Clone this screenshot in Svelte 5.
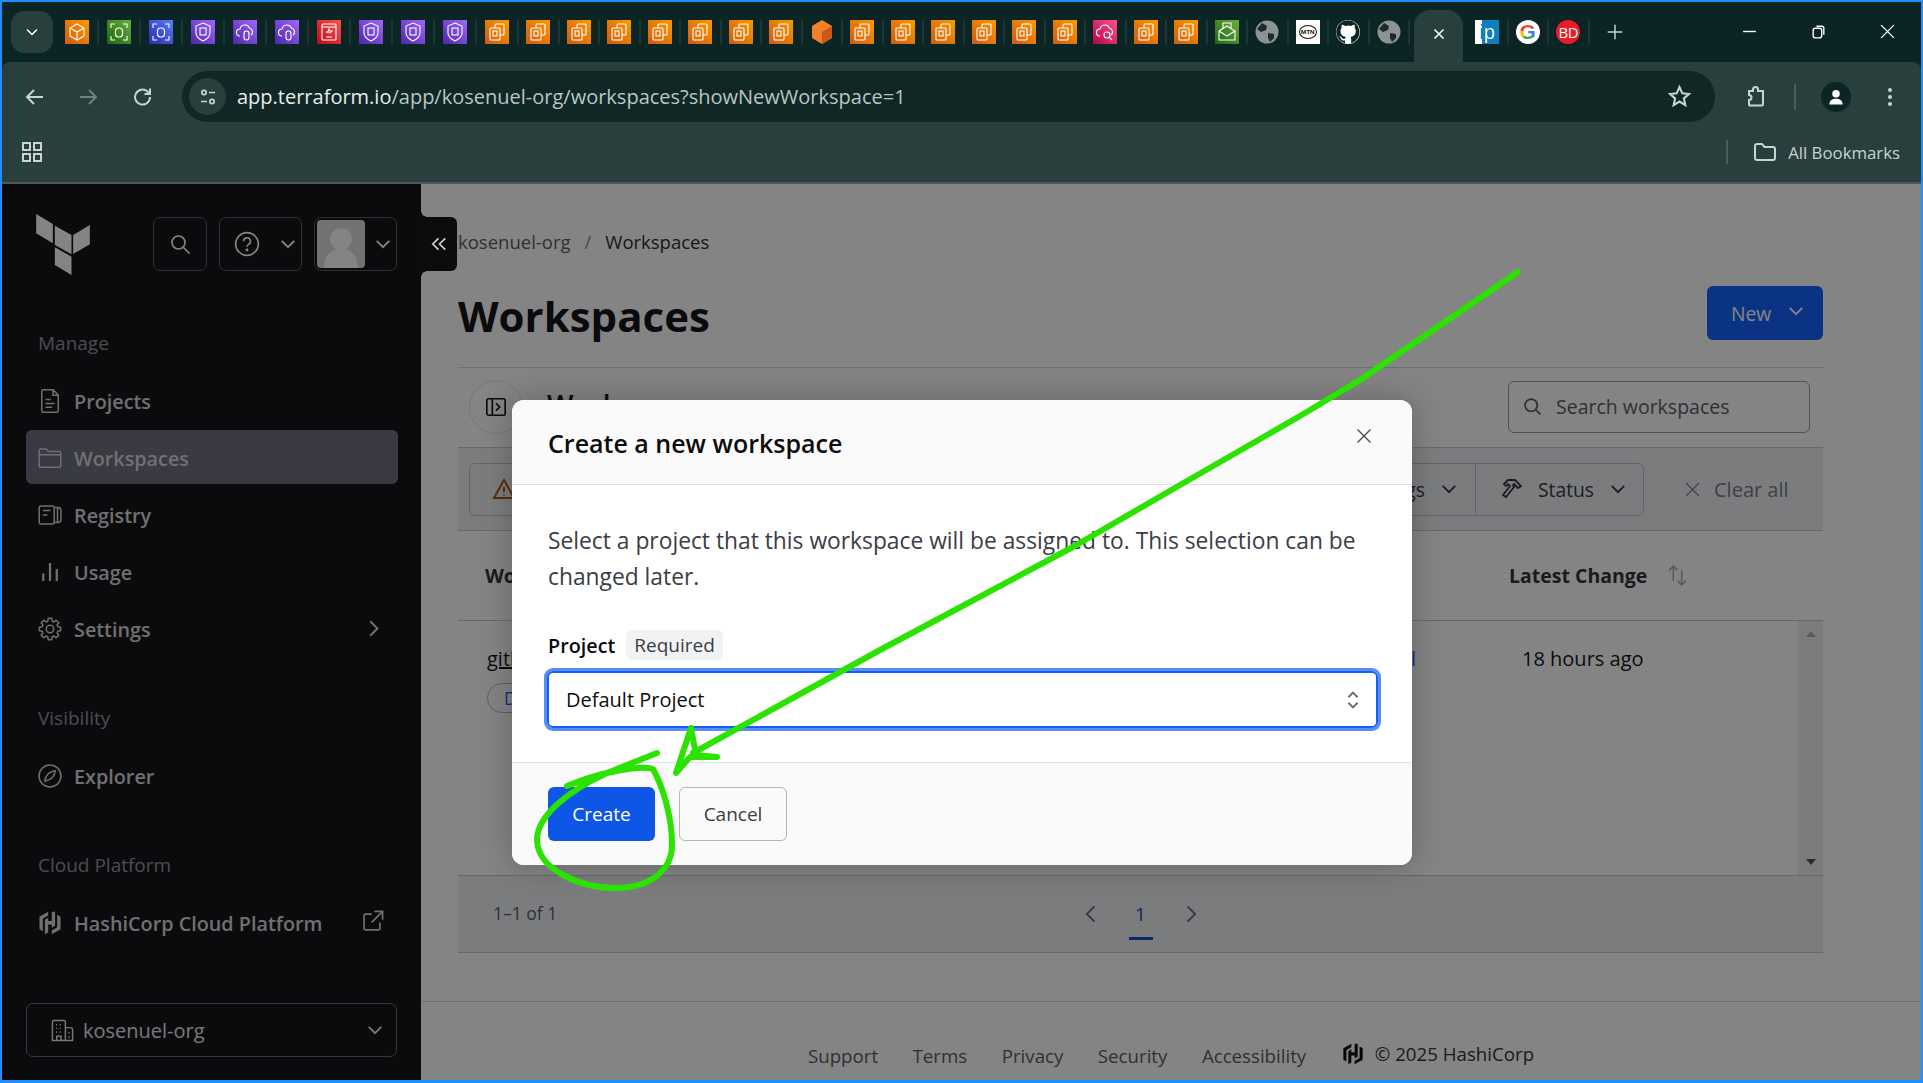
<script>
	const lead = ['cube', 'scanG', 'scanB', 'shield', 'cloud', 'cloud', 'red', 'shield', 'shield', 'shield', 'ec2'];
	const rest = ['ec2', 'ec2', 'ec2', 'ec2', 'ec2', 'ec2', 'ec2', 'hex', 'ec2', 'ec2', 'ec2', 'ec2', 'ec2', 'ec2', 'pink', 'ec2', 'ec2', 'mail', 'globe', 'mtn', 'github', 'globe'];
	const after = ['ip', 'google', 'bd'];

	const nav = [
		{ label: 'Projects', icon: 'doc' },
		{ label: 'Workspaces', icon: 'folder', active: true },
		{ label: 'Registry', icon: 'registry' },
		{ label: 'Usage', icon: 'usage' },
		{ label: 'Settings', icon: 'gear', more: true }
	];

	// eight toothed gear outline
	function gearPath() {
		let d = '';
		for (let i = 0; i < 8; i++) {
			const a = (i * Math.PI) / 4;
			const pts = [[-0.27, 5.4], [-0.17, 7.2], [0.17, 7.2], [0.27, 5.4]];
			for (const [da, r] of pts) {
				const x = 8 + r * Math.sin(a + da);
				const y = 8 - r * Math.cos(a + da);
				d += (d ? 'L' : 'M') + x.toFixed(2) + ' ' + y.toFixed(2);
			}
		}
		return d + 'Z';
	}
	const gear = gearPath();
</script>

{#snippet fav(kind)}
	{#if kind === 'globe'}
		<svg class="fav" viewBox="0 0 24 24"><circle cx="12" cy="12" r="11.5" fill="#8b9393" /><path d="M7 3l5 3-1 4-5 2-4-3zM13 13l6 1 0 4-4 4-2-4z" fill="#1d2b2b" /></svg>
	{:else if kind === 'github'}
		<svg class="fav" viewBox="0 0 16 16"><circle cx="8" cy="8" r="8" fill="#fff" /><path d="M8 .2a7.8 7.8 0 0 0-2.5 15.2c.4.1.5-.2.5-.4v-1.4c-2.2.5-2.6-1-2.6-1-.4-.9-.9-1.200-.9-1.200-.7-.5.1-.5.1-.5.8.1 1.200.8 1.200.8.7 1.200 1.900.9 2.300.7.100-.5.300-.9.500-1.100-1.700-.2-3.600-.9-3.600-3.900 0-.9.300-1.600.800-2.100-.1-.2-.4-1 .1-2.100 0 0 .7-.2 2.200.8a7.500 7.500 0 0 1 4 0c1.500-1 2.200-.8 2.200-.8.4 1.100.2 1.900.1 2.100.5.5.8 1.200.8 2.100 0 3-1.900 3.700-3.600 3.900.3.200.5.700.5 1.400v2.200c0 .2.100.5.500.4A7.800 7.800 0 0 0 8 .2z" fill="#0b2524" /></svg>
	{:else if kind === 'mtn'}
		<span class="fav mtn"><b>MTN</b></span>
	{:else if kind === 'ip'}
		<span class="fav ip"><b>ip</b></span>
	{:else if kind === 'google'}
		<span class="fav google"><b>G</b></span>
	{:else if kind === 'bd'}
		<span class="fav bd"><b>BD</b></span>
	{:else if kind === 'hex'}
		<svg class="fav" viewBox="0 0 24 24"><path d="M12 0l10 6v12l-10 6-10-6V6z" fill="#f0812a" /><path d="M12 12l10-6v12l-10 6z" fill="#c9581a" /></svg>
	{:else}
		<svg class="fav box {kind}" viewBox="0 0 24 24" fill="none" stroke="#fff" stroke-width="1.1">
			{#if kind === 'cube'}
				<path d="M12 4l7 4v8l-7 4-7-4V8zM5 8l7 4 7-4M12 12v8" />
			{:else if kind === 'scanG' || kind === 'scanB'}
				<path d="M4 8V4h4M16 4h4v4M4 16v4h4M16 20h4v-4" />
				<rect x="8.500" y="8" width="7" height="9" rx="3" />
			{:else if kind === 'shield'}
				<path d="M12 3l7 3v7c0 4-3 6-7 8-4-2-7-4-7-8V6z" /><rect x="9" y="8" width="6" height="7" />
			{:else if kind === 'cloud' || kind === 'pink'}
				<path d="M7 16a3.500 3.500 0 0 1 0-7 5 5 0 0 1 9.500-1A4 4 0 0 1 18 15" />
				{#if kind === 'cloud'}<rect x="11" y="11" width="5" height="9" rx="2.500" />{:else}<circle cx="14" cy="15" r="3" /><path d="M16 17l3 3" />{/if}
			{:else if kind === 'red'}
				<rect x="5" y="4" width="14" height="16" rx="1" /><path d="M5 7h14M9 17h6M12 9l1 2h2l-2 2-4-1h2z" />
			{:else if kind === 'mail'}
				<path d="M4 11l8-5 8 5v9H4zM4 11l8 5 8-5" /><path d="M8 9V3h8v6" />
			{:else}
				<path d="M10 8V5a1 1 0 0 1 1-1h7a1 1 0 0 1 1 1v9a1 1 0 0 1-1 1h-3" /><rect x="5" y="8" width="10" height="12" rx="1" /><rect x="8" y="11" width="4" height="5" />
			{/if}
		</svg>
	{/if}
{/snippet}

{#snippet navIcon(kind)}
	<svg class="nav-ic" viewBox="0 0 16 16" fill="none" stroke="currentColor" stroke-width="1">
		{#if kind === 'doc'}
			<path d="M2.500 1.500a1 1 0 0 1 1-1H10l3.500 3.500v10.500a1 1 0 0 1-1 1h-9a1 1 0 0 1-1-1zM5 7h3.500M5 9.700h6M5 12.200h4.500M10 .8v3.400h3.300" />
		{:else if kind === 'folder'}
			<path d="M.8 3a1 1 0 0 1 1-1h3.700l1.500 1.700h7.200a1 1 0 0 1 1 1v8.500a1 1 0 0 1-1 1H1.800a1 1 0 0 1-1-1zM.8 5.800h14.400" />
		{:else if kind === 'registry'}
			<path d="M1.800 2h8a1 1 0 0 1 1 1v10a1 1 0 0 1-1 1h-8a1 1 0 0 1-1-1V3a1 1 0 0 1 1-1zM3.300 5h5M3.300 8h3M10.800 3h2.500a2 2 0 0 1 2 2v6a2 2 0 0 1-2 2h-2.500M13 3v10" />
		{:else if kind === 'usage'}
			<path stroke-width="1.500" d="M3.500 9v5M8 2v12M12.500 6v8" />
		{:else if kind === 'gear'}
			<path d={gear} stroke-linejoin="round" /><circle cx="8" cy="8" r="2.500" />
		{:else if kind === 'compass'}
			<circle cx="8" cy="8" r="7.300" /><path d="M11.500 4.500c-.3 3.500-2 6-7 7 .5-4 3-6.500 7-7z" />
		{/if}
	</svg>
{/snippet}

{#snippet chevron(cls)}
	<svg class="chev {cls}" viewBox="0 0 16 16" fill="none" stroke="currentColor" stroke-width="1.500"><path d="M3 5.500l5 5 5-5" /></svg>
{/snippet}

{#snippet hashi(cls)}
	<svg class={cls} viewBox="0 0 16 16" fill="currentColor"><path d="M6.800.5L1 3.800v8.400l2.200 1.300V5.100l3.600-2.100zM9.200.5v6.200H6.800V4.500L4.600 5.800V15.500l2.200-1.300V9h2.400v2.200l2.200-1.300V.5zM12.800 2.500v8.400l-3.600 2.100v2.500L15 12.200V3.800z" /></svg>
{/snippet}

<div class="frame">
	<header class="tabstrip">
		<button class="tabsearch" aria-label="Search tabs">{@render chevron('tabsearch-ic')}</button>
		{#each lead as t}
			<div class="tab wide">{@render fav(t)}</div>
		{/each}
		{#each rest as t}
			<div class="tab">{@render fav(t)}</div>
		{/each}
		<div class="tab-active">
			<svg viewBox="0 0 16 16" class="tab-close" fill="none" stroke="currentColor" stroke-width="1.500"><path d="M3.500 3.500l9 9M12.500 3.500l-9 9" /></svg>
		</div>
		{#each after as t}
			<div class="tab">{@render fav(t)}</div>
		{/each}
		<svg class="plus" viewBox="0 0 16 16" fill="none" stroke="currentColor" stroke-width="1.300"><path d="M8 1.500v13M1.500 8h13" /></svg>
		<div class="win">
			<svg viewBox="0 0 16 16" fill="none" stroke="currentColor" stroke-width="1.300"><path d="M2 8h12" /></svg>
			<svg viewBox="0 0 16 16" fill="none" stroke="currentColor" stroke-width="1.300"><rect x="3" y="5" width="8" height="9" rx="2" /><path d="M6 3h5a2 2 0 0 1 2 2v6" /></svg>
			<svg viewBox="0 0 16 16" fill="none" stroke="currentColor" stroke-width="1.300"><path d="M2 2l12 12M14 2L2 14" /></svg>
		</div>
	</header>

	<div class="toolbar">
		<div class="navrow">
			<svg class="tb back" viewBox="0 0 24 24" fill="none" stroke="currentColor" stroke-width="2"><path d="M20 12H5M11 5l-7 7 7 7" /></svg>
			<svg class="tb fwd" viewBox="0 0 24 24" fill="none" stroke="currentColor" stroke-width="2"><path d="M4 12h15M13 5l7 7-7 7" /></svg>
			<svg class="tb reload" viewBox="0 0 24 24" fill="none" stroke="currentColor" stroke-width="2"><path d="M19 12a7.500 7.500 0 1 1-2.500-5.500L19 9M19 3.500V9h-5.500" /></svg>
			<div class="omni">
				<span class="sec">
					<svg viewBox="0 0 20 20" fill="none" stroke="currentColor" stroke-width="1.700"><circle cx="6" cy="5.500" r="2.200" /><path d="M11 5.500h6M3 14.500h6" /><circle cx="14" cy="14.500" r="2.200" /></svg>
				</span>
				<span class="url"><em>app.terraform.io</em>/app/kosenuel-org/workspaces?showNewWorkspace=1</span>
				<svg class="star" viewBox="0 0 24 24" fill="none" stroke="currentColor" stroke-width="2"><path d="M12 3l2.700 6 6.300.6-4.800 4.200 1.400 6.400-5.600-3.400-5.600 3.400 1.400-6.400L3 9.600 9.300 9z" /></svg>
			</div>
			<svg class="tb ext" viewBox="0 0 24 24" fill="none" stroke="currentColor" stroke-width="2"><path d="M5 6h4V4.500a2.500 2.500 0 0 1 5 0V6h5v13a1.500 1.500 0 0 1-1.500 1.500h-12A1.500 1.500 0 0 1 5 19v-4a2.500 2.500 0 0 0 0-5z" /></svg>
			<span class="tb-div"></span>
			<span class="profile">
				<svg viewBox="0 0 24 24" fill="#fff"><circle cx="12" cy="8" r="4.500" /><path d="M4 21c0-5 3.500-7 8-7s8 2 8 7z" /></svg>
			</span>
			<svg class="dots" viewBox="0 0 6 24" fill="currentColor"><circle cx="3" cy="5" r="2" /><circle cx="3" cy="12" r="2" /><circle cx="3" cy="19" r="2" /></svg>
		</div>
		<div class="bookmarks">
			<svg class="apps" viewBox="0 0 22 22" fill="none" stroke="currentColor" stroke-width="2"><rect x="2" y="2" width="7" height="7" /><rect x="13" y="2" width="7" height="7" /><rect x="2" y="13" width="7" height="7" /><rect x="13" y="13" width="7" height="7" /></svg>
			<span class="bm-div"></span>
			<svg class="bm-folder" viewBox="0 0 24 24" fill="none" stroke="currentColor" stroke-width="2"><path d="M2 6a2 2 0 0 1 2-2h5l2.500 3H20a2 2 0 0 1 2 2v9a2 2 0 0 1-2 2H4a2 2 0 0 1-2-2z" /></svg>
			<span class="bm-text">All Bookmarks</span>
		</div>
	</div>

	<div class="page">
		<aside class="sidebar">
			<div class="side-top">
				<svg class="tf-logo" viewBox="107 87 161 183" fill="#fff"><path d="M107 87l50 30v58l-50-30zM163 122l50 28v58l-50-28zM218 150l50-30v58l-50 29zM163 187l50 28v55l-50-30z" /></svg>
				<button class="sq search-btn" aria-label="Search">
					<svg viewBox="0 0 24 24" fill="none" stroke="currentColor" stroke-width="1.700"><circle cx="10.500" cy="10.500" r="6.500" /><path d="M15.500 15.500l6 6" /></svg>
				</button>
				<button class="sq help-btn" aria-label="Help">
					<svg viewBox="0 0 24 24" fill="none" stroke="currentColor" stroke-width="1.500"><circle cx="12" cy="12" r="10.500" /><path d="M8.800 9.500a3.200 3.200 0 1 1 4.700 2.800c-1 .6-1.500 1.100-1.500 2.200" /><circle cx="12" cy="17.500" r=".6" /></svg>
					{@render chevron('side-chev')}
				</button>
				<button class="sq user-btn" aria-label="Account">
					<span class="avatar"><svg viewBox="0 0 48 48"><circle cx="24" cy="19" r="11" /><path d="M7 48c0-13 7-19 17-19s17 6 17 19z" /></svg></span>
					{@render chevron('side-chev')}
				</button>
			</div>

			<div class="side-head first">Manage</div>
			{#each nav as n}
				<div class="nav-item" class:active={n.active}>
					{@render navIcon(n.icon)}
					<span>{n.label}</span>
					{#if n.more}
						<svg class="nav-more" viewBox="0 0 16 16" fill="none" stroke="currentColor" stroke-width="1.500"><path d="M5.500 2.500l5.500 5.500-5.500 5.500" /></svg>
					{/if}
				</div>
			{/each}

			<div class="side-head">Visibility</div>
			<div class="nav-item">{@render navIcon('compass')}<span>Explorer</span></div>

			<div class="side-head">Cloud Platform</div>
			<div class="nav-item">
				{@render hashi('nav-ic')}
				<span>HashiCorp Cloud Platform</span>
				<svg class="nav-more ext-link" viewBox="0 0 16 16" fill="none" stroke="currentColor" stroke-width="1.200"><path d="M7 3H2.500a1 1 0 0 0-1 1v9.500a1 1 0 0 0 1 1H12a1 1 0 0 0 1-1V9M9 1h6v6M15 1L7 9" /></svg>
			</div>

			<div class="org">
				<svg viewBox="0 0 16 16" fill="none" stroke="currentColor" stroke-width="1"><path d="M1 15V2a1 1 0 0 1 1-1h7a1 1 0 0 1 1 1v13M10 6h3.500a1.500 1.500 0 0 1 1.500 1.500V15M.5 15h15M3.500 4h.8M6 4h.8M3.500 6.500h.8M6 6.500h.8M3.500 9h.8M6 9h.8M4 15v-3h3v3M12.500 9v1M12.500 12v1" /></svg>
				<span>kosenuel-org</span>
				{@render chevron('org-chev')}
			</div>
		</aside>

		<main class="main">
			<nav class="crumbs"><a href="#org">kosenuel-org</a><i>/</i><span>Workspaces</span></nav>
			<div class="title-row">
				<h1>Workspaces</h1>
				<button class="new-btn">New {@render chevron('new-chev')}</button>
			</div>

			<section class="card">
				<div class="card-top">
					<span class="toggle"><svg viewBox="0 0 24 24" fill="none" stroke="currentColor" stroke-width="1.800"><rect x="2" y="3" width="20" height="18" rx="2" /><path d="M8 3v18M12 8l4 4-4 4" /></svg></span>
					<h2>Workspaces</h2>
					<div class="search">
						<svg viewBox="0 0 24 24" fill="none" stroke="currentColor" stroke-width="2"><circle cx="10.500" cy="10.500" r="7" /><path d="M16 16l5 5" /></svg>
						<span>Search workspaces</span>
					</div>
				</div>
				<div class="filters">
					<div class="filter-group">
						<svg class="warn" viewBox="0 0 24 24" fill="none" stroke="#a85a10" stroke-width="2"><path d="M12 3l10 18H2zM12 10v5M12 17.500v1" /></svg>
						<span class="fg-tags">Tags {@render chevron('f-chev')}</span>
						<span class="fg-status">
							<svg viewBox="0 0 24 24" fill="none" stroke="currentColor" stroke-width="1.800"><path d="M4 7l4-4h7l6 6-3 2-4-4-1 1 1 2-8 10-3-2 7-9-2-2-2 2z" /></svg>
							Status {@render chevron('f-chev')}
						</span>
					</div>
					<span class="clear">
						<svg viewBox="0 0 16 16" fill="none" stroke="currentColor" stroke-width="1.300"><path d="M2 2l12 12M14 2L2 14" /></svg>
						Clear all
					</span>
				</div>
				<div class="thead">
					<span class="th-name">Workspace name</span>
					<span class="th-change">Latest Change</span>
					<svg class="sort" viewBox="0 0 20 24" fill="none" stroke="currentColor" stroke-width="1.500"><path d="M6 17V3M2 7l4-4 4 4M14 7v14M10 17l4 4 4-4" /></svg>
				</div>
				<div class="tbody">
					<div class="row">
						<div class="cell-name">
							<a href="#ws">github-repo</a>
							<span class="pill">Default</span>
						</div>
						<a class="cell-link" href="#run">control</a>
						<span class="cell-time">18 hours ago</span>
					</div>
					<div class="scroll"><span class="up"></span><span class="down"></span></div>
				</div>
				<div class="pager">
					<span class="count">1–1 of 1</span>
					<div class="pages">
						<svg viewBox="0 0 16 16" fill="none" stroke="currentColor" stroke-width="1.300"><path d="M10.500 2.500L5 8l5.500 5.500" /></svg>
						<span class="cur">1</span>
						<svg viewBox="0 0 16 16" fill="none" stroke="currentColor" stroke-width="1.300"><path d="M5.500 2.500L11 8l-5.500 5.500" /></svg>
					</div>
				</div>
			</section>

			<footer class="foot">
				<a href="#s">Support</a><a href="#t">Terms</a><a href="#p">Privacy</a><a href="#se">Security</a><a href="#a">Accessibility</a>
				<span class="copy">{@render hashi('foot-logo')}© 2025 HashiCorp</span>
			</footer>
		</main>

		<div class="scrim"></div>

		<div class="collapse">
			<svg viewBox="0 0 16 16" fill="none" stroke="currentColor" stroke-width="1.500"><path d="M7.500 3L2.500 8l5 5M13.500 3l-5 5 5 5" /></svg>
		</div>

		<div class="modal">
			<div class="m-head">
				<h3>Create a new workspace</h3>
				<svg viewBox="0 0 16 16" fill="none" stroke="currentColor" stroke-width="1.400"><path d="M1.500 1.500l13 13M14.500 1.500l-13 13" /></svg>
			</div>
			<div class="m-body">
				<p>Select a project that this workspace will be assigned to. This selection can be changed later.</p>
				<div class="label"><b>Project</b><span>Required</span></div>
				<div class="select">
					<span>Default Project</span>
					<svg viewBox="0 0 16 24" fill="none" stroke="currentColor" stroke-width="2"><path d="M3 9l5-5 5 5M3 15l5 5 5-5" /></svg>
				</div>
			</div>
			<div class="m-foot">
				<button class="create">Create</button>
				<button class="cancel">Cancel</button>
			</div>
		</div>
	</div>

	<!-- hand drawn annotation on top of the screenshot -->
	<svg class="ink" viewBox="0 0 1923 1083" fill="none" stroke="#2be200" stroke-linecap="round" stroke-linejoin="round">
		<path stroke-width="6" d="M1518 272L1360 380L1300 416L1180 485L1073 547L880 650L693 753" />
		<path stroke-width="6" d="M691 728L676 773L690 757L717 757L696 755Z" />
		<path stroke-width="6" d="M657 753L607 773C570 790 537 815 537 840C538 870 580 888 616 888C650 888 672 870 672 845C672 815 662 785 653 769C640 765 600 772 567 786" />
	</svg>
</div>

<style>
	:global(body) {
		margin: 0;
		background: #1e90ff;
	}
	:global(#app) {
		font-family: "Open Sans", "Noto Sans", sans-serif;
	}
	.frame {
		position: relative;
		width: 1923px;
		height: 1083px;
		box-sizing: border-box;
		border: 2px solid #1e90ff;
		border-bottom-width: 3px;
		display: flex;
		flex-direction: column;
		overflow: hidden;
		background: #0b2524;
	}

	/* browser chrome */
	.tabstrip {
		height: 60px;
		flex: none;
		display: flex;
		align-items: flex-start;
		padding-left: 9px;
		box-sizing: border-box;
		position: relative;
		color: #c7d4d2;
	}
	.tabsearch {
		width: 42px;
		height: 42px;
		margin-top: 9px;
		margin-right: 4px;
		padding: 0;
		border: none;
		border-radius: 14px;
		background: #283f3d;
		color: #fff;
		display: flex;
		align-items: center;
		justify-content: center;
	}
	.tabsearch :global(.chev) {
		width: 16px;
		height: 16px;
	}
	.tab {
		width: 40.500px;
		flex: none;
		height: 24px;
		margin-top: 18px;
		display: flex;
		justify-content: center;
		box-sizing: border-box;
		border-right: 2px solid #1d3634;
	}
	.tab.wide {
		width: 42px;
	}
	.fav {
		width: 24px;
		height: 24px;
		flex: none;
		display: flex;
		align-items: center;
		justify-content: center;
		overflow: hidden;
	}
	.box {
		background: linear-gradient(45deg, #cc5c10, #ff9900);
	}
	.box.scanG, .box.mail {
		background: linear-gradient(45deg, #1b660f, #6cae3e);
	}
	.box.scanB {
		background: linear-gradient(45deg, #2e27ad, #527fff);
	}
	.box.shield, .box.cloud {
		background: linear-gradient(45deg, #4d27a8, #a166ff);
	}
	.box.red {
		background: linear-gradient(45deg, #bd0816, #ff5252);
	}
	.box.pink {
		background: linear-gradient(45deg, #b0084d, #ff4f8b);
	}
	.mtn {
		background: #fff;
		color: #111;
	}
	.mtn b {
		font-size: 6px;
		border: 1px solid #111;
		border-radius: 50%;
		padding: 3px 1px;
		line-height: 1;
	}
	.ip {
		background: linear-gradient(90deg, #fff 0 30%, #0f7fc0 30%);
		font-size: 20px;
		line-height: 24px;
		font-family: "Liberation Sans", sans-serif;
	}
	.ip b {
		font-weight: 400;
		background: linear-gradient(90deg, #0f7fc0 0 30%, #fff 30%);
		-webkit-background-clip: text;
		background-clip: text;
		color: transparent;
	}
	.google {
		background: #fff;
		border-radius: 50%;
		font-size: 21px;
		font-family: "Liberation Sans", sans-serif;
	}
	.google b {
		background: conic-gradient(from 45deg, #3b7de8 0 25%, #34a853 25% 50%, #fbbc05 50% 65%, #ea4335 65%);
		-webkit-background-clip: text;
		background-clip: text;
		color: transparent;
	}
	.bd {
		background: #ec1c24;
		border-radius: 50%;
		color: #fff;
		font-size: 15px;
	}
	.bd b {
		font-weight: 400;
		letter-spacing: -0.5px;
	}
	.tab-active {
		width: 49px;
		height: 52px;
		margin: 8px 5px 0 4px;
		flex: none;
		background: #283f3d;
		border-radius: 16px 16px 0 0;
		display: flex;
		align-items: center;
		justify-content: center;
		color: #fff;
		padding-bottom: 4px;
		box-sizing: border-box;
		position: relative;
	}
	.tab-close {
		width: 16px;
		height: 16px;
	}
	.plus {
		width: 18px;
		height: 18px;
		margin: 21px 0 0 16.500px;
		flex: none;
	}
	.win {
		margin-left: auto;
		width: 155px;
		margin-top: 21px;
		margin-right: 25px;
		display: flex;
		justify-content: space-between;
		color: #fff;
	}
	.win svg {
		width: 17px;
		height: 17px;
	}
	.toolbar {
		height: 122px;
		flex: none;
		box-sizing: border-box;
		background: #283f3d;
		border-radius: 8px 8px 0 0;
		border-bottom: 2px solid #4a5b59;
		color: #c7d4d2;
	}
	.navrow {
		height: 69px;
		display: flex;
		align-items: center;
	}
	.tb {
		width: 24px;
		height: 24px;
		flex: none;
	}
	.back {
		margin-left: 21px;
	}
	.fwd {
		margin-left: 29px;
		opacity: 0.45;
	}
	.reload {
		margin-left: 31px;
	}
	.omni {
		width: 1533px;
		height: 51px;
		margin: 0 0 0 27px;
		flex: none;
		background: #112726;
		border-radius: 26px;
		display: flex;
		align-items: center;
		box-sizing: border-box;
		padding-left: 7px;
	}
	.sec {
		width: 37px;
		height: 37px;
		border-radius: 50%;
		background: #283f3d;
		display: flex;
		align-items: center;
		justify-content: center;
		flex: none;
	}
	.sec svg {
		width: 20px;
		height: 20px;
	}
	.url {
		margin-left: 11px;
		font-size: 20px;
		color: #b9c6c4;
		white-space: nowrap;
	}
	.url em {
		font-style: normal;
		color: #e6eeed;
	}
	.star {
		width: 25px;
		height: 25px;
		margin-left: auto;
		margin-right: 23px;
	}
	.ext {
		margin-left: 29px;
	}
	.tb-div {
		width: 2px;
		height: 26px;
		background: #4a5b59;
		margin-left: 26px;
	}
	.profile {
		width: 30px;
		height: 30px;
		border-radius: 50%;
		background: #0b2524;
		display: flex;
		align-items: center;
		justify-content: center;
		margin-left: 25px;
	}
	.profile svg {
		width: 20px;
		height: 20px;
	}
	.dots {
		width: 6px;
		height: 24px;
		margin-left: 36px;
	}
	.bookmarks {
		height: 42px;
		display: flex;
		align-items: center;
		box-sizing: border-box;
	}
	.apps {
		width: 22px;
		height: 22px;
		margin-left: 19px;
	}
	.bm-div {
		width: 2px;
		height: 24px;
		background: #4a5b59;
		margin-left: auto;
	}
	.bm-folder {
		width: 24px;
		height: 24px;
		margin-left: 25px;
	}
	.bm-text {
		font-size: 16.800px;
		margin: 0 21px 0 11px;
		color: #c7d4d2;
	}

	/* page */
	.page {
		flex: 1;
		display: flex;
		position: relative;
		min-height: 0;
		background: #fff;
	}
	.scrim {
		position: absolute;
		inset: 0;
		background: rgba(0, 0, 0, 0.483);
	}
	.sidebar {
		width: 419px;
		flex: none;
		box-sizing: border-box;
		background: #17171b;
		padding: 0 23px 0 24px;
		display: flex;
		flex-direction: column;
		color: #d6d7dc;
	}
	.side-top {
		display: flex;
		align-items: flex-start;
		height: 107px;
		padding-top: 33px;
		box-sizing: border-box;
		position: relative;
	}
	.tf-logo {
		width: 54px;
		height: 61px;
		margin: -3px 0 0 10px;
		flex: none;
	}
	.sq {
		height: 54px;
		box-sizing: border-box;
		border: 1.500px solid #5a5b63;
		border-radius: 7px;
		background: transparent;
		color: #fff;
		display: flex;
		align-items: center;
		padding: 0;
	}
	.sq > svg {
		flex: none;
	}
	.search-btn {
		width: 54px;
		margin-left: 63px;
		justify-content: center;
	}
	.search-btn svg {
		width: 24px;
		height: 24px;
	}
	.help-btn {
		width: 83px;
		margin-left: 12px;
		padding-left: 14px;
	}
	.help-btn > svg:first-child {
		width: 26px;
		height: 26px;
	}
	.user-btn {
		width: 83px;
		margin-left: 12px;
		padding-left: 2px;
	}
	.avatar {
		width: 48px;
		height: 48px;
		border-radius: 4px;
		overflow: hidden;
		display: block;
		background: #dcdcdc;
	}
	.avatar svg {
		display: block;
		width: 48px;
		height: 48px;
		fill: #fff;
	}
	.sq :global(.side-chev) {
		width: 20px;
		height: 20px;
		margin-left: auto;
		margin-right: 3px;
	}
	.side-head {
		height: 35px;
		margin-top: 46px;
		padding-left: 12px;
		font-size: 19px;
		line-height: 35px;
		color: #92949f;
	}
	.side-head.first {
		margin-top: 35px;
	}
	.nav-item {
		height: 54px;
		margin-top: 3px;
		padding: 3px 13px 0 12px;
		box-sizing: border-box;
		display: flex;
		align-items: center;
		gap: 12px;
		font-size: 19.800px;
		font-weight: 600;
		border-radius: 6px;
		color: #d8d8dc;
	}
	.side-head + .nav-item {
		margin-top: 12px;
	}
	.nav-item.active {
		background: #6e7180;
	}
	.nav-item :global(.nav-ic) {
		width: 24px;
		height: 24px;
		flex: none;
		margin-top: -2px;
	}
	.nav-more {
		width: 21px;
		height: 21px;
		margin-left: auto;
		margin-right: 1px;
		margin-top: -2px;
	}
	.ext-link {
		width: 22px;
		height: 22px;
		margin-top: -6px;
	}
	.org {
		margin-top: auto;
		margin-bottom: 23px;
		height: 54px;
		box-sizing: border-box;
		border: 1.500px solid #6e6f76;
		border-radius: 7px;
		display: flex;
		align-items: center;
		padding: 0 14px 0 24px;
		font-size: 20px;
		color: #e6e6ea;
		margin-right: 1px;
	}
	.org > svg {
		width: 23px;
		height: 23px;
		flex: none;
		margin-right: 9px;
	}
	.org :global(.org-chev) {
		width: 20px;
		height: 20px;
		margin-left: auto;
		margin-right: -2.500px;
	}

	.collapse {
		position: absolute;
		left: 419px;
		top: 33px;
		width: 36px;
		height: 54px;
		background: #0c0c0e;
		border-radius: 0 6px 6px 0;
		color: #d0d0d0;
		display: flex;
		align-items: center;
		justify-content: center;
	}
	.collapse::before, .collapse::after {
		content: '';
		position: absolute;
		left: 0;
		width: 6px;
		height: 6px;
	}
	.collapse::before {
		top: -6px;
		background: radial-gradient(circle at 100% 0, transparent 5.500px, #0c0c0e 6px);
	}
	.collapse::after {
		bottom: -6px;
		background: radial-gradient(circle at 100% 100%, transparent 5.500px, #0c0c0e 6px);
	}
	.collapse svg {
		width: 18px;
		height: 18px;
	}

	.main {
		flex: 1;
		min-width: 0;
		display: flex;
		flex-direction: column;
		padding: 0 98px 0 37px;
		color: #17171b;
	}
	.crumbs {
		height: 28px;
		margin-top: 43px;
		margin-bottom: 1px;
		display: flex;
		align-items: center;
		font-size: 18.500px;
		color: #2d2f36;
	}
	.crumbs a {
		color: #5c5e68;
		text-decoration: none;
	}
	.crumbs i {
		font-style: normal;
		color: #8a8c96;
		margin: 0 14px;
	}
	.title-row {
		height: 111px;
		display: flex;
		align-items: flex-start;
		justify-content: space-between;
	}
	h1 {
		margin: 35px 0 0;
		font-size: 42px;
		font-weight: 700;
		line-height: 50px;
	}
	.new-btn {
		margin-top: 30px;
		width: 116px;
		height: 54px;
		background: #1763ff;
		color: #fff;
		border: none;
		border-radius: 6px;
		font: inherit;
		font-size: 19.300px;
		display: flex;
		align-items: center;
		padding: 0 17px 0 24px;
		justify-content: space-between;
	}
	.new-btn :global(.new-chev) {
		width: 20px;
		height: 20px;
		margin-top: -4px;
	}
	.card {
		border-top: 1.500px solid #d6d7dd;
	}
	.card-top {
		height: 79px;
		display: flex;
		align-items: center;
		box-sizing: border-box;
		padding: 0 13px 2px 11px;
	}
	.toggle {
		width: 54px;
		height: 54px;
		border-radius: 50%;
		border: 1.500px solid #e4e4e8;
		box-sizing: border-box;
		display: flex;
		align-items: center;
		justify-content: center;
	}
	.toggle svg {
		width: 22px;
		height: 22px;
	}
	h2 {
		margin: -3px 0 0 24px;
		font-size: 28px;
		font-weight: 600;
	}
	.search {
		margin-left: auto;
		width: 302px;
		height: 52px;
		box-sizing: border-box;
		border: 1.500px solid #9b9da8;
		border-radius: 6px;
		display: flex;
		align-items: center;
		gap: 13px;
		padding: 0 13px;
		font-size: 19.500px;
		color: #5c5e68;
	}
	.search svg {
		width: 21px;
		height: 21px;
	}
	.filters {
		height: 84px;
		box-sizing: border-box;
		border-top: 1.500px solid #c8c9d0;
		border-bottom: 1.500px solid #c8c9d0;
		background: #eeeff3;
		display: flex;
		align-items: center;
		padding-left: 11px;
	}
	.filter-group {
		width: 1175px;
		height: 53px;
		box-sizing: border-box;
		border: 1.500px solid #c0c1c8;
		border-radius: 6px;
		display: flex;
		align-items: center;
		font-size: 19.300px;
		padding-left: 22px;
		color: #3a3b42;
	}
	.warn {
		width: 24px;
		height: 24px;
	}
	.fg-tags {
		margin-left: auto;
		display: flex;
		align-items: center;
		gap: 14px;
	}
	.fg-status {
		margin-left: 16px;
		height: 100%;
		width: 168px;
		border-left: 1.500px solid #c0c1c8;
		display: flex;
		align-items: center;
		box-sizing: border-box;
		padding-left: 24px;
		gap: 14px;
	}
	.fg-status > svg {
		width: 24px;
		height: 24px;
	}
	.filters :global(.f-chev) {
		width: 20px;
		height: 20px;
	}
	.clear {
		margin-left: 40px;
		display: flex;
		align-items: center;
		gap: 13px;
		font-size: 20px;
		color: #7a7c86;
	}
	.clear svg {
		width: 17px;
		height: 17px;
	}
	.thead {
		height: 90px;
		box-sizing: border-box;
		border-bottom: 1.500px solid #c8c9d0;
		display: flex;
		align-items: center;
		padding-left: 27px;
		font-size: 19.500px;
		font-weight: 700;
		color: #33343b;
	}
	.th-change {
		margin-left: auto;
		width: 152px;
	}
	.sort {
		width: 21px;
		height: 25px;
		margin-right: 135px;
		color: #a6a8b2;
		margin-left: 6px;
	}
	.tbody {
		height: 254px;
		box-sizing: border-box;
		display: flex;
		position: relative;
	}
	.row {
		flex: 1;
		display: flex;
		align-items: flex-start;
		padding: 24px 0 0 29px;
		font-size: 20px;
	}
	.cell-name {
		display: flex;
		flex-direction: column;
		align-items: flex-start;
		gap: 10px;
	}
	.cell-name a {
		color: #17171b;
	}
	.pill {
		border: 1.500px solid #b8bac4;
		border-radius: 20px;
		padding: 2px 16px;
		color: #1060ff;
		font-size: 17.500px;
		margin-top: 1px;
	}
	.cell-link {
		margin-left: auto;
		color: #1060ff;
		text-decoration: none;
	}
	.cell-time {
		margin-left: 106px;
		width: 276px;
		color: #17171b;
	}
	.scroll {
		width: 25px;
		background: #f0f0f0;
		position: relative;
	}
	.up, .down {
		position: absolute;
		left: 8px;
		border-left: 5px solid transparent;
		border-right: 5px solid transparent;
	}
	.up {
		top: 10px;
		border-bottom: 6px solid #b0b0b0;
	}
	.down {
		bottom: 10px;
		border-top: 6px solid #505050;
	}
	.pager {
		height: 78px;
		box-sizing: border-box;
		border-top: 1.500px solid #c8c9d0;
		border-bottom: 1.500px solid #c8c9d0;
		background: #eeeff3;
		position: relative;
		display: flex;
		align-items: center;
		justify-content: center;
	}
	.count {
		position: absolute;
		left: 35px;
		top: 25px;
		font-size: 17.500px;
		color: #5c5e68;
	}
	.pages {
		display: flex;
		align-items: center;
		gap: 27px;
		height: 100%;
		color: #6a6c76;
		box-sizing: border-box;
	}
	.pages svg {
		width: 22px;
		height: 22px;
	}
	.cur {
		width: 24px;
		text-align: center;
		color: #1c4fb8;
		font-size: 19px;
		position: relative;
		height: 100%;
		line-height: 76px;
	}
	.cur::after {
		content: '';
		position: absolute;
		left: 0;
		right: 0;
		bottom: 12px;
		height: 3px;
		background: #1c4fb8;
	}
	.foot {
		margin: 48px -98px 0 -37px;
		border-top: 1.500px solid #d6d7dd;
		height: 78px;
		display: flex;
		align-items: flex-start;
		justify-content: center;
		gap: 34.500px;
		padding-top: 41px;
		box-sizing: border-box;
		font-size: 18.700px;
	}
	.foot a {
		color: #5c5e68;
		text-decoration: none;
	}
	.copy {
		display: flex;
		align-items: center;
		gap: 11px;
		color: #33343b;
		margin-top: -2px;
		margin-left: 1px;
	}
	.copy :global(.foot-logo) {
		width: 22px;
		height: 22px;
		color: #0c0c0e;
	}

	/* dialog */
	.modal {
		position: absolute;
		left: 510px;
		top: 216px;
		width: 900px;
		height: 465px;
		background: #fff;
		border-radius: 12px;
		overflow: hidden;
		display: flex;
		flex-direction: column;
		box-shadow: 0 0 30px rgba(0, 0, 0, 0.25);
	}
	.m-head {
		height: 85px;
		flex: none;
		box-sizing: border-box;
		background: #fafafa;
		border-bottom: 1.500px solid #e1e1e6;
		display: flex;
		align-items: center;
		justify-content: space-between;
		padding: 0 40px 0 36px;
		color: #0c0c0e;
	}
	h3 {
		margin: 0;
		font-size: 25px;
		font-weight: 600;
		padding-top: 1px;
	}
	.m-head svg {
		width: 16px;
		height: 16px;
		color: #4a4c56;
		margin-top: -12px;
	}
	.m-body {
		flex: 1;
		padding: 38px 36px 0 36px;
	}
	.m-body p {
		margin: 0;
		font-size: 22.800px;
		line-height: 36px;
		color: #3b3d45;
	}
	.label {
		display: flex;
		align-items: center;
		gap: 11px;
		margin-top: 35px;
		height: 30px;
	}
	.label b {
		font-size: 19.800px;
		font-weight: 600;
		color: #0c0c0e;
	}
	.label span {
		background: #f1f2f3;
		border-radius: 6px;
		padding: 0 8px;
		font-size: 19px;
		line-height: 30px;
		color: #3b3d45;
	}
	.select {
		margin: 11px -2px 0 -1px;
		height: 57px;
		box-sizing: border-box;
		border: 2px solid #1060ff;
		border-radius: 6px;
		box-shadow: 0 0 0 3px #5a8cf5;
		display: flex;
		align-items: center;
		justify-content: space-between;
		padding: 0 15px 0 17px;
		font-size: 20px;
		color: #0c0c0e;
	}
	.select svg {
		width: 16px;
		height: 22px;
		color: #656a76;
	}
	.m-foot {
		height: 103px;
		flex: none;
		box-sizing: border-box;
		background: #fafafa;
		border-top: 1.500px solid #e1e1e6;
		display: flex;
		align-items: flex-start;
		gap: 24px;
		padding: 24px 0 0 36px;
	}
	.m-foot button {
		height: 54px;
		border-radius: 6px;
		font: inherit;
		font-size: 19px;
		padding: 0;
	}
	.create {
		width: 107px;
		background: #0e56e6;
		color: #fff;
		border: none;
		font-weight: 500 !important;
		line-height: 58px;
	}
	.cancel {
		width: 108px;
		background: #fafafa;
		color: #3b3d45;
		border: 1.500px solid #b5b6bd;
		line-height: 53px;
	}
	.ink {
		position: absolute;
		left: -2px;
		top: -2px;
		width: 1923px;
		height: 1083px;
		pointer-events: none;
	}
</style>
